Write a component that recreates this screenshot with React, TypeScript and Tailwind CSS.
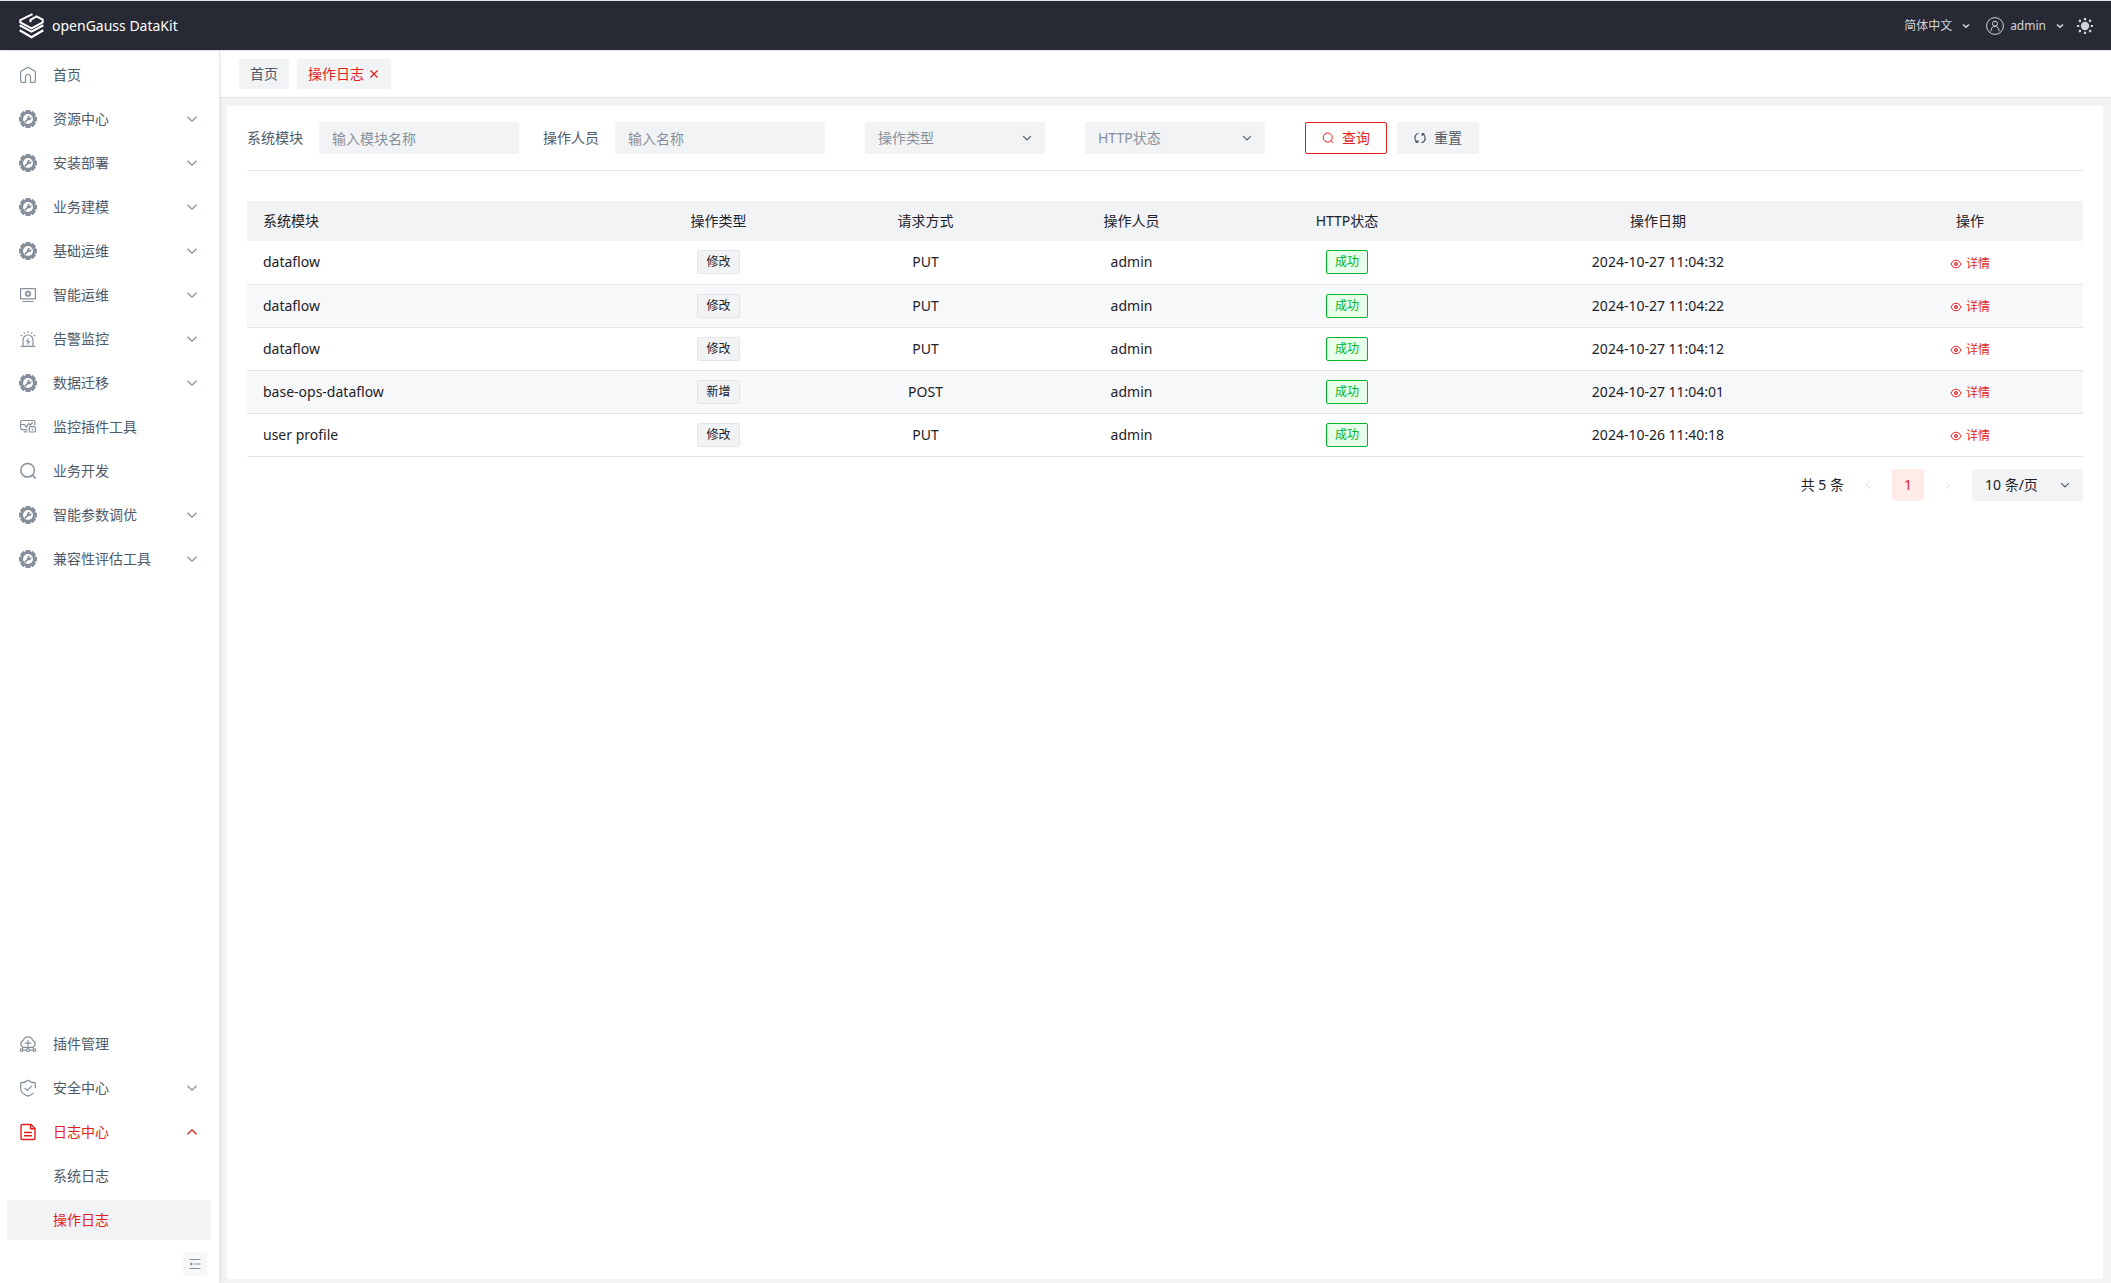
import { ReactNode } from "react";
import clsx from "clsx";

type IconProps = { className?: string };

const Chevron = ({ className }: IconProps) => (
  <svg viewBox="0 0 14 14" fill="none" stroke="currentColor" className={className}>
    <path d="M2.500 4.800 7 9.200l4.500-4.400" strokeWidth="1.300" />
  </svg>
);

const SmallChevron = () => (
  <svg viewBox="0 0 8 8" fill="none" stroke="currentColor" className="size-2">
    <path d="m1 2.500 3 2.700 3-2.700" strokeWidth="1.600" />
  </svg>
);

const LineIcon = ({ children }: { children: ReactNode }) => (
  <svg viewBox="0 0 18 18" fill="none" stroke="currentColor" strokeWidth="1.200" className="size-[18px] shrink-0">
    {children}
  </svg>
);

const HomeIcon = () => (
  <LineIcon>
    <path d="M5.500 16.400H3.200A1.700 1.700 0 0 1 1.600 14.700V6.300c0-.6.3-1 .7-1.300l5.700-3.300c.6-.4 1.400-.4 2 0l5.700 3.300c.4.3.7.8.7 1.300v8.400a1.700 1.700 0 0 1-1.600 1.700H11.500V11a2.500 2.500 0 0 0-5 0v5.400z" />
  </LineIcon>
);

const GearIcon = () => (
  <svg viewBox="0 0 18 18" fill="currentColor" className="size-[18px] shrink-0">
    <circle cx="9" cy="9" r="7.600" />
    <rect x="6.400" y="0" width="5.200" height="18" rx=".8" />
    <rect x="0" y="6.400" width="18" height="5.200" rx=".8" />
    <rect x="6.400" y="0" width="5.200" height="18" rx=".8" transform="rotate(45 9 9)" />
    <rect x="0" y="6.400" width="18" height="5.200" rx=".8" transform="rotate(45 9 9)" />
    <circle cx="9" cy="9" r="4.900" fill="#fff" />
    <path d="M5.300 11.300 8 9a2.700 2.700 0 0 1 3.400-3.200L9.900 7.400l.8.800 1.700-1.400A2.700 2.700 0 0 1 9 10.200l-2.500 2.600z" />
  </svg>
);

const ScreenGearIcon = () => (
  <LineIcon>
    <rect x="1.600" y="2.600" width="14.800" height="10.300" rx=".5" />
    <circle cx="9" cy="7.800" r="2" strokeWidth="1.600" />
    <path d="M9 4.600v1M9 10v1M5.800 7.800h1M11.200 7.800h1M6.700 5.500l.7.700M10.600 9.400l.7.700M11.300 5.500l-.7.700M7.400 9.400l-.7.700M3.500 15.500h11" />
  </LineIcon>
);

const AlarmIcon = () => (
  <LineIcon>
    <path d="M1.800 16.400h14.400M4 16.200V10a5 5 0 0 1 10 0v6.200M9.500 8.500 7.800 11.500h2.400L8.500 14.500M9 1.200v1.600M4.800 2.200l.9 1.400M13.200 2.200l-.9 1.400M1.700 5l1.500.9M16.300 5l-1.500.9" />
  </LineIcon>
);

const MonitorIcon = () => (
  <LineIcon>
    <path d="M8.500 11.700H3.100a1.400 1.400 0 0 1-1.400-1.400V3.900c0-.8.6-1.400 1.400-1.400h11.300c.8 0 1.400.6 1.400 1.400v3.300M1.800 6.500h3.600l2 2.600 2.400-3.700 1.400 1.600 2.500-2.500M4.500 13.900h4" />
    <rect x="10.300" y="8.700" width="6" height="5.300" rx="1" />
    <path d="M13.300 10.500v2" />
  </LineIcon>
);

const SearchIcon = ({ className = "size-[18px] shrink-0" }: IconProps) => (
  <svg viewBox="0 0 18 18" fill="none" stroke="currentColor" strokeWidth="1.500" className={className}>
    <circle cx="8.600" cy="8.300" r="6.800" />
    <path d="m13.400 13.100 3.300 3.300" />
  </svg>
);

const CloudIcon = () => (
  <LineIcon>
    <path d="M4.700 12.400A3.700 3.700 0 0 1 4.300 5.300 4.900 4.900 0 0 1 13.700 5.300a3.700 3.700 0 0 1-.4 7.100zM9 5v6.500M5.800 8.200h6.400M9 12.400v1.700M3.700 15.200h3.600M10.700 15.200h3.600M3 13.900l1.200-1.500M15 13.900l-1.200-1.500" />
    <circle cx="2.500" cy="15.200" r="1.300" />
    <circle cx="9" cy="15.200" r="1.500" />
    <circle cx="15.500" cy="15.200" r="1.300" />
  </LineIcon>
);

const ShieldIcon = () => (
  <LineIcon>
    <path d="M16.300 9.300V3.900C13.500 3.800 11 2.900 9 1.200 7 2.900 4.500 3.800 1.700 3.900v5.400c0 3.800 3 6.500 7.300 7.800 2.300-.7 4.200-1.800 5.500-3.200M5.600 8.800l2.700 2.700 4.600-4.700" />
  </LineIcon>
);

const LogIcon = () => (
  <LineIcon>
    <path d="M12 1.500H3.500a1.500 1.500 0 0 0-1.500 1.500v12a1.500 1.500 0 0 0 1.500 1.500h11A1.500 1.500 0 0 0 16 15V5.500zM11.500 1.700V5.800H16M5 9.500h8M5 12.800h8" strokeWidth="1.400" />
  </LineIcon>
);

const Logo = () => (
  <svg viewBox="0 0 25 26" fill="none" stroke="#fff" strokeWidth="2" className="h-[26px] w-[25px]">
    <path d="M13.500 1.200 1.300 7.200v2.200l11.200 5.900 11.200-5.900V6.600l-6.200-3.200-6 3.400v2.400" />
    <path d="m.7 12.300 11.800 6.300 11.800-6.300M.7 17.200l11.800 7 11.800-7" strokeWidth="2.200" />
  </svg>
);

type MenuEntry = { label: string; icon: () => ReactNode; more?: boolean };

const mainMenu: MenuEntry[] = [
  { label: "首页", icon: HomeIcon },
  { label: "资源中心", icon: GearIcon, more: true },
  { label: "安装部署", icon: GearIcon, more: true },
  { label: "业务建模", icon: GearIcon, more: true },
  { label: "基础运维", icon: GearIcon, more: true },
  { label: "智能运维", icon: ScreenGearIcon, more: true },
  { label: "告警监控", icon: AlarmIcon, more: true },
  { label: "数据迁移", icon: GearIcon, more: true },
  { label: "监控插件工具", icon: MonitorIcon },
  { label: "业务开发", icon: () => <SearchIcon /> },
  { label: "智能参数调优", icon: GearIcon, more: true },
  { label: "兼容性评估工具", icon: GearIcon, more: true },
];

const bottomMenu: MenuEntry[] = [
  { label: "插件管理", icon: CloudIcon },
  { label: "安全中心", icon: ShieldIcon, more: true },
  { label: "日志中心", icon: LogIcon, more: true },
];

const logs = [
  { module: "dataflow", type: "修改", method: "PUT", user: "admin", date: "2024-10-27 11:04:32" },
  { module: "dataflow", type: "修改", method: "PUT", user: "admin", date: "2024-10-27 11:04:22" },
  { module: "dataflow", type: "修改", method: "PUT", user: "admin", date: "2024-10-27 11:04:12" },
  { module: "base-ops-dataflow", type: "新增", method: "POST", user: "admin", date: "2024-10-27 11:04:01" },
  { module: "user profile", type: "修改", method: "PUT", user: "admin", date: "2024-10-26 11:40:18" },
];

const MenuItem = ({ item, open }: { item: MenuEntry; open?: boolean }) => (
  <li>
    <a
      href="#"
      className={clsx("flex h-10 items-center gap-4 rounded-xs px-3", open ? "text-[#e41d1d]" : "text-[#4e5969]")}
    >
      <span className={open ? "text-[#e41d1d]" : "text-[#86909c]"}>
        <item.icon />
      </span>
      <span className="flex-1">{item.label}</span>
      {item.more && <Chevron className={clsx("size-3.5", open ? "rotate-180" : "text-[#86909c]")} />}
    </a>
  </li>
);

const Header = () => (
  <header className="flex h-[51px] items-center justify-between border-t border-b border-[#e5e6eb] bg-[#272a34] pr-[17px] pl-[19px]">
    <a href="#" className="flex items-center gap-2 text-sm text-white">
      <Logo />
      openGauss DataKit
    </a>
    <div className="flex items-center text-xs text-[#d0d3da]">
      <button className="flex items-center gap-2.5">
        简体中文
        <SmallChevron />
      </button>
      <button className="ml-4 flex items-center gap-1.5">
        <svg viewBox="0 0 18 18" fill="none" stroke="currentColor" className="size-[18px]">
          <circle cx="9" cy="9" r="8.400" />
          <circle cx="9" cy="6.700" r="2.500" />
          <path d="M4.800 14.200c.3-3 1.800-5 4.200-5s3.900 2 4.200 5" />
        </svg>
        <span className="mr-1">admin</span>
        <SmallChevron />
      </button>
      <button aria-label="切换主题" className="ml-3">
        <svg viewBox="0 0 18 18" fill="currentColor" className="size-[18px]">
          <circle cx="9" cy="9" r="4.200" />
          <path d="M7.900 1h2.200v2.200H7.900zM7.900 14.800h2.200V17H7.900zM1 7.900h2.200v2.200H1zM14.800 7.900H17v2.200h-2.200z" />
          <circle cx="3.900" cy="3.900" r="1.300" />
          <circle cx="14.100" cy="3.900" r="1.300" />
          <circle cx="3.900" cy="14.100" r="1.300" />
          <circle cx="14.100" cy="14.100" r="1.300" />
        </svg>
      </button>
    </div>
  </header>
);

const Sidebar = () => (
  <aside className="z-10 flex w-[220px] shrink-0 flex-col justify-between border-r border-[#e5e6eb] bg-white py-1 pr-2 pl-[7px] shadow-[0_2px_5px_rgba(0,0,0,0.08)]">
    <ul className="flex flex-col gap-1">
      {mainMenu.map((item) => (
        <MenuItem key={item.label} item={item} />
      ))}
    </ul>
    <div className="flex flex-col pb-[3px]">
      <ul className="flex flex-col gap-1">
        {bottomMenu.map((item) => (
          <MenuItem key={item.label} item={item} open={item.label === "日志中心"} />
        ))}
        <li>
          <a href="#" className="flex h-10 items-center rounded-xs pl-[46px] text-[#4e5969]">系统日志</a>
        </li>
        <li>
          <a href="#" className="flex h-10 items-center rounded-xs bg-[#f2f3f5] pl-[46px] text-[#e41d1d]">操作日志</a>
        </li>
      </ul>
      <button
        aria-label="收起菜单"
        className="mt-3 mr-1 flex size-6 items-center justify-center self-end rounded-xs bg-[#f7f8fa] text-[#86909c]"
      >
        <svg viewBox="0 0 12 12" className="size-3" fill="none" stroke="currentColor">
          <path d="M.5 1.500h11M4.500 6h7M.5 10.500h11" strokeWidth="1.200" />
          <path d="M3.200 4v4L.6 6z" fill="currentColor" stroke="none" />
        </svg>
      </button>
    </div>
  </aside>
);

const FilterSelect = ({ label }: { label: string }) => (
  <div className="relative w-[180px] text-[#86909c]">
    <select aria-label={label} className="h-8 w-full appearance-none rounded-xs bg-[#f2f3f5] pr-8 pl-[13px]">
      <option>{label}</option>
    </select>
    <Chevron className="pointer-events-none absolute top-2.5 right-3 size-3 text-[#4e5969]" />
  </div>
);

const Filters = () => (
  <form className="flex items-center border-b border-[#e5e6eb] pb-4 text-[#4e5969]" onSubmit={(e) => e.preventDefault()}>
    <label htmlFor="module">系统模块</label>
    <input
      id="module"
      placeholder="输入模块名称"
      className="ml-4 h-8 w-[200px] rounded-xs bg-[#f2f3f5] px-[13px] placeholder:text-[#86909c]"
    />
    <label htmlFor="operator" className="ml-6">操作人员</label>
    <input
      id="operator"
      placeholder="输入名称"
      className="ml-4 h-8 w-[210px] rounded-xs bg-[#f2f3f5] px-[13px] placeholder:text-[#86909c]"
    />
    <div className="ml-10 flex gap-10">
      <FilterSelect label="操作类型" />
      <FilterSelect label="HTTP状态" />
      <div className="flex gap-2.5">
        <button className="flex h-8 w-[82px] items-center justify-center gap-2 rounded-xs border border-[#e41d1d] text-[#e41d1d]">
          <SearchIcon className="size-3" />
          查询
        </button>
        <button type="reset" className="flex h-8 w-[82px] items-center justify-center gap-2 rounded-xs bg-[#f2f3f5]">
          <svg viewBox="0 0 14 14" fill="none" stroke="currentColor" strokeWidth="1.400" className="size-3">
            <path d="M5.200 1.500A5.700 5.700 0 0 0 4 12M8.800 12.500A5.700 5.700 0 0 0 10 2M1.800 12h2.600V9.400M12.200 2H9.600v2.600" />
          </svg>
          重置
        </button>
      </div>
    </div>
  </form>
);

const LogTable = () => (
  <table className="mt-[30px] w-full table-fixed text-center text-[#1d2129]">
    <colgroup>
      <col className="w-[367px]" />
      <col className="w-[209px]" />
      <col className="w-[205px]" />
      <col className="w-[207px]" />
      <col className="w-[224px]" />
      <col className="w-[398px]" />
      <col className="w-[226px]" />
    </colgroup>
    <thead className="bg-[#f2f3f5]">
      <tr className="h-10">
        <th className="px-4 text-left font-normal">系统模块</th>
        <th className="font-normal">操作类型</th>
        <th className="font-normal">请求方式</th>
        <th className="font-normal">操作人员</th>
        <th className="font-normal">HTTP状态</th>
        <th className="font-normal">操作日期</th>
        <th className="font-normal">操作</th>
      </tr>
    </thead>
    <tbody>
      {logs.map((log) => (
        <tr key={log.date} className="h-[43px] border-b border-[#e5e6eb] even:bg-[#f7f8fa]">
          <td className="px-4 text-left">{log.module}</td>
          <td>
            <span className="inline-flex h-6 items-center rounded-xs border border-[#e5e6eb] bg-[#f2f3f5] px-2 align-middle text-xs">
              {log.type}
            </span>
          </td>
          <td>{log.method}</td>
          <td>{log.user}</td>
          <td>
            <span className="inline-flex h-6 items-center rounded-xs border border-[#00b42a] bg-[#e8ffea] px-2 align-middle text-xs text-[#00b42a]">
              成功
            </span>
          </td>
          <td>{log.date}</td>
          <td>
            <button className="inline-flex items-center gap-1 align-middle text-xs text-[#e41d1d]">
              <svg viewBox="0 0 12 12" fill="none" stroke="currentColor" className="size-3">
                <path d="M1 6c2-5 8-5 10 0-2 5-8 5-10 0z" />
                <circle cx="6" cy="6" r="1.500" fill="currentColor" fillOpacity=".4" />
              </svg>
              详情
            </button>
          </td>
        </tr>
      ))}
    </tbody>
  </table>
);

const Pagination = () => (
  <div className="mt-3 flex items-center justify-end gap-2 text-[#1d2129]">
    <span>共 5 条</span>
    <button aria-label="上一页" disabled className="flex size-8 items-center justify-center text-[#e5e6eb]">
      <Chevron className="size-3 rotate-90" />
    </button>
    <button className="size-8 rounded-xs bg-[#ffece8] text-[#e41d1d]">1</button>
    <button aria-label="下一页" disabled className="flex size-8 items-center justify-center text-[#e5e6eb]">
      <Chevron className="size-3 -rotate-90" />
    </button>
    <div className="relative w-[111px]">
      <select aria-label="每页条数" className="h-8 w-full appearance-none rounded-xs bg-[#f2f3f5] pl-[13px]">
        <option>10 条/页</option>
      </select>
      <Chevron className="pointer-events-none absolute top-2.5 right-3 size-3 text-[#4e5969]" />
    </div>
  </div>
);

const App = () => (
  <div className="flex min-h-screen flex-col bg-white font-['Noto_Sans','Noto_Sans_CJK_SC',sans-serif] text-sm">
    <Header />
    <div className="flex flex-1">
      <Sidebar />
      <main className="flex min-w-0 flex-1 flex-col">
        <nav className="flex h-[47px] items-center gap-2 border-b border-[#e5e6eb] pl-[19px]">
          <a href="#" className="flex h-[30px] items-center rounded-xs bg-[#f2f3f5] px-[11px] text-[#4e5969]">首页</a>
          <div className="flex h-[30px] items-center gap-1 rounded-xs bg-[#f2f3f5] px-[11px] text-[#e41d1d]">
            <a href="#">操作日志</a>
            <button aria-label="关闭">
              <svg viewBox="0 0 12 12" stroke="currentColor" strokeWidth="1.200" className="size-3">
                <path d="m2.500 2.500 7 7M9.500 2.500l-7 7" />
              </svg>
            </button>
          </div>
        </nav>
        <div className="flex flex-1 flex-col bg-[#f2f3f5] pt-2 pr-2 pb-1 pl-[7px]">
          <section className="flex-1 rounded-xs bg-white px-5 py-4">
            <Filters />
            <LogTable />
            <Pagination />
          </section>
        </div>
      </main>
    </div>
  </div>
);

export default App;
